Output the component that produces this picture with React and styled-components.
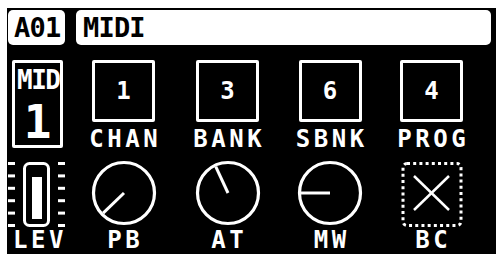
import React from "react";
import styled, { createGlobalStyle } from "styled-components";

const Global = createGlobalStyle`
  html, body { margin: 0; padding: 0; background: #fff; }
  body { font-family: "DejaVu Sans Mono", "Liberation Mono", monospace; }
`;

const Screen = styled.div`
  margin: 8px 0 0 7px;
  width: 489px;
  height: 246px;
  box-sizing: border-box;
  background: #000;
  padding: 2px 5px 0 1px;
  display: flex;
  flex-direction: column;
  color: #fff;
  font-family: "DejaVu Sans Mono", "Liberation Mono", monospace;
  font-weight: bold;
`;

const Header = styled.div`
  display: flex;
  gap: 11px;
  height: 35px;
`;

const Tab = styled.div`
  flex: ${(p) => (p.$grow ? 1 : "0 0 57px")};
  background: #fff;
  color: #000;
  border-radius: 5px;
  display: flex;
  align-items: center;
  padding-left: ${(p) => (p.$grow ? 7 : 6)}px;
  font-size: 27px;
  letter-spacing: -0.8px;
  box-sizing: border-box;
`;

const Grid = styled.div`
  margin-top: 15px;
  display: grid;
  grid-template-columns: 64px 103px 105px 100px 103px;
  grid-template-rows: 89px 90px;
  row-gap: 11px;
`;

const Cell = styled.div`
  display: flex;
  flex-direction: column;
  align-items: ${(p) => (p.$left ? "flex-start" : "center")};
`;

const ValueBox = styled.div`
  width: 63px;
  height: 62px;
  box-sizing: border-box;
  border: 3px solid #fff;
  border-radius: 2px;
  display: flex;
  align-items: center;
  justify-content: center;
  font-size: 24px;
  line-height: 1;
`;

const Label = styled.div`
  margin-top: ${(p) => p.$gap || 7}px;
  margin-left: ${(p) => p.$indent || 0}px;
  height: 20px;
  line-height: 20px;
  font-size: 24px;
  letter-spacing: 3.5px;
  margin-right: -3.5px;
  white-space: nowrap;
`;

const TrackBox = styled.div`
  margin-left: 4px;
  width: 51px;
  height: 88px;
  box-sizing: border-box;
  border: 3px solid #fff;
  border-radius: 2px;
  display: flex;
  flex-direction: column;
  align-items: center;
`;

const TrackName = styled.div`
  margin-top: 4px;
  font-size: 26px;
  line-height: 26px;
  letter-spacing: -1.5px;
  margin-right: -1.5px;
`;

const TrackNum = styled.div`
  margin-top: 6px;
  font-size: 46px;
  line-height: 46px;
`;

const Graphic = styled.svg`
  display: block;
  flex: none;
`;

function Knob({ angle }) {
  const c = 33;
  const r = 30.5;
  const len = 29;
  const a = (angle * Math.PI) / 180;
  const x = c + Math.sin(a) * len;
  const y = c - Math.cos(a) * len;
  return (
    <Graphic width="66" height="66" viewBox="0 0 66 66">
      <circle cx={c} cy={c} r={r} fill="none" stroke="#fff" strokeWidth="3.2" />
      <line x1={c} y1={c} x2={x} y2={y} stroke="#fff" strokeWidth="3" />
    </Graphic>
  );
}

function Fader() {
  const ticks = [0, 1, 2, 3, 4, 5];
  return (
    <Graphic width="64" height="68" viewBox="0 0 64 68">
      {ticks.map((i) => (
        <React.Fragment key={i}>
          <rect x="0" y={2 + i * 12.4} width="7" height="3" fill="#fff" />
          <rect x="50" y={2 + i * 12.4} width="7" height="3" fill="#fff" />
        </React.Fragment>
      ))}
      <rect x="16.5" y="3.5" width="24" height="62" rx="5" fill="none" stroke="#fff" strokeWidth="3" />
      <rect x="24" y="17" width="10" height="42" fill="#fff" />
    </Graphic>
  );
}

function Bypass() {
  return (
    <Graphic width="64" height="68" viewBox="0 0 64 68">
      <rect
        x="3"
        y="3.5"
        width="58"
        height="62"
        rx="4"
        fill="none"
        stroke="#fff"
        strokeWidth="3"
        strokeDasharray="3 3.2"
      />
      <line x1="14" y1="16" x2="49" y2="50" stroke="#fff" strokeWidth="2.5" />
      <line x1="49" y1="16" x2="14" y2="50" stroke="#fff" strokeWidth="2.5" />
    </Graphic>
  );
}

const params = [
  { label: "CHAN", value: "1" },
  { label: "BANK", value: "3" },
  { label: "SBNK", value: "6" },
  { label: "PROG", value: "4" },
];

const knobs = [
  { label: "PB", angle: 226 },
  { label: "AT", angle: -25 },
  { label: "MW", angle: 270 },
];

export default function App() {
  return (
    <>
      <Global />
      <Screen>
        <Header>
          <Tab>A01</Tab>
          <Tab $grow>MIDI</Tab>
        </Header>
        <Grid>
          <Cell $left>
            <TrackBox>
              <TrackName>MID</TrackName>
              <TrackNum>1</TrackNum>
            </TrackBox>
          </Cell>
          {params.map((p) => (
            <Cell key={p.label}>
              <ValueBox>{p.value}</ValueBox>
              <Label>{p.label}</Label>
            </Cell>
          ))}
          <Cell $left>
            <Fader />
            <Label $gap={2} $indent={5}>LEV</Label>
          </Cell>
          {knobs.map((k) => (
            <Cell key={k.label}>
              <Knob angle={k.angle} />
              <Label $gap={4}>{k.label}</Label>
            </Cell>
          ))}
          <Cell>
            <Bypass />
            <Label $gap={2}>BC</Label>
          </Cell>
        </Grid>
      </Screen>
    </>
  );
}
